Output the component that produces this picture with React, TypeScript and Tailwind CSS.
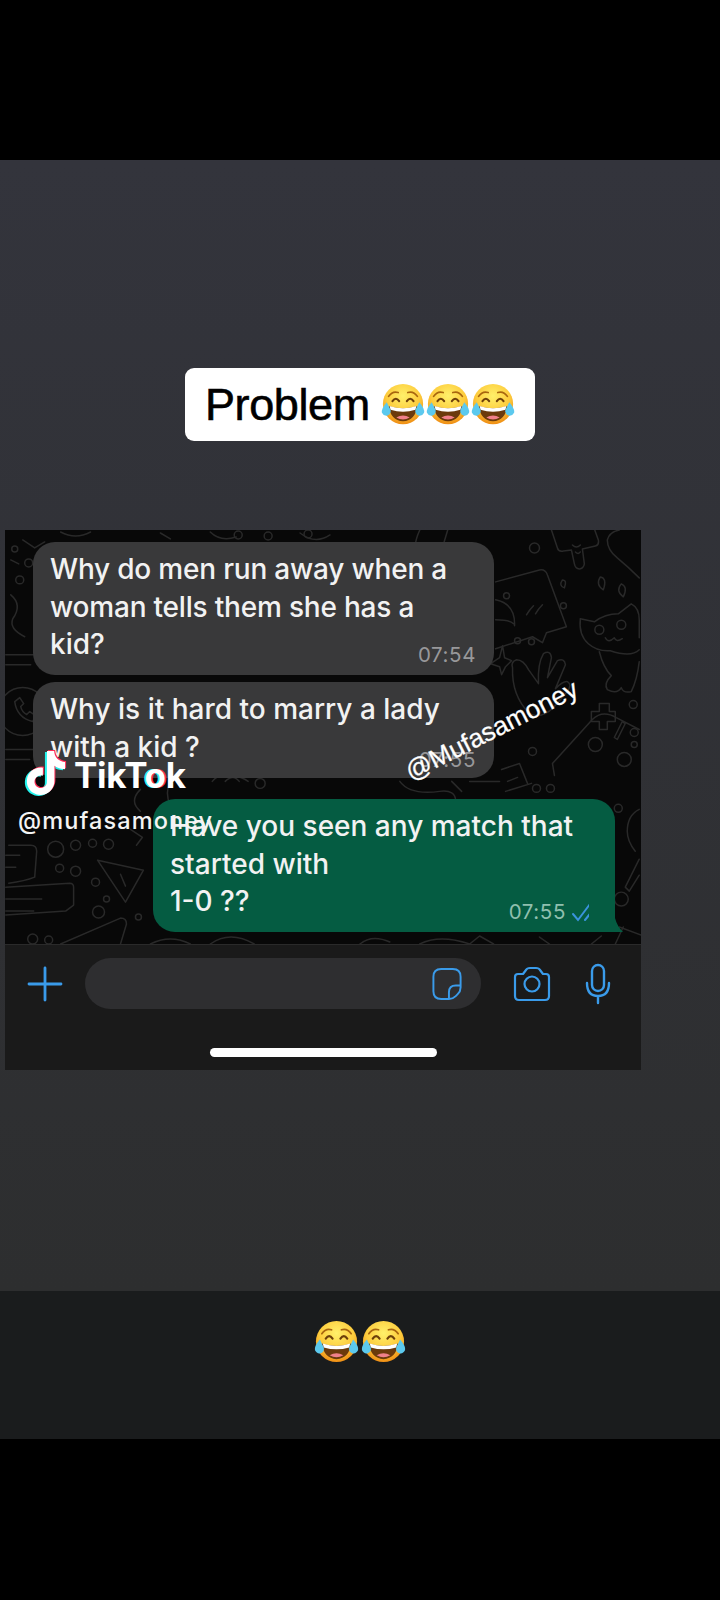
import { SiTiktok } from "react-icons/si";

const font = { fontFamily: 'Inter, "Liberation Sans", sans-serif' };

function Emoji({ size, id }: { size: number; id: string }) {
  return (
    <svg width={size} height={size} viewBox="0 0 48 48" className="shrink-0">
      <defs>
        <radialGradient id={id} cx="50%" cy="30%" r="72%">
          <stop offset="0%" stopColor="#fff06a" />
          <stop offset="58%" stopColor="#fdcb3c" />
          <stop offset="100%" stopColor="#ee8a12" />
        </radialGradient>
      </defs>
      <circle cx="24" cy="23" r="21" fill={`url(#${id})`} />
      <path d="M9 15q4-6 10-4M39 15q-4-6-10-4" stroke="#a8660f" strokeWidth="1.8" fill="none" strokeLinecap="round" />
      <path d="M13 20q3.500-5 7 0M28 20q3.500-5 7 0" stroke="#6d3f0a" strokeWidth="2.200" fill="none" strokeLinecap="round" />
      <path d="M9 25q15 5 30 0q-2 15-15 16q-13-1-15-16z" fill="#6b3a0c" />
      <path d="M10 25q14 5 28 0l-1 4q-13 4-26 0z" fill="#fff" />
      <path d="M17 37q7-4 14 0q-7 4-14 0z" fill="#f0808a" />
      <path d="M7 21q-6 7-5 11q2 4 6 3q4-2 3-6z" fill="#5cc9ee" />
      <path d="M41 21q6 7 5 11q-2 4-6 3q-4-2-3-6z" fill="#5cc9ee" />
    </svg>
  );
}

function Wallpaper() {
  return (
    <svg
      viewBox="5 530 636 415"
      className="absolute inset-0 h-full w-full"
      fill="none"
      stroke="#292929"
      strokeWidth="1.500"
      strokeLinecap="round"
      strokeLinejoin="round"
    >
      {/* left edge */}
      <path d="M22 540l12 8 10-6M10 560l8 4" />
      <circle cx="19" cy="580" r="4" />
      <circle cx="28" cy="563" r="4" />
      <circle cx="14" cy="549" r="3" />
      <path d="M10 595q12 10 2 24q-4 10 12 18M5 655h28M5 665h25" />
      <circle cx="22" cy="712" r="24" />
      <path d="M14 702q2 16 18 20l3-6-6-4-3 3q-5-3-6-8l3-3-4-6z" />
      <path d="M5 750h28M5 760h24" />
      {/* top strip */}
      <path d="M60 532q15 8 30 0M160 533l10 6M210 532q10 10 26 5M300 533q15 12 30 2" />
      <circle cx="238" cy="535" r="4" />
      <circle cx="268" cy="536" r="4" />
      <circle cx="308" cy="534" r="4" />
      {/* right-top stickers */}
      <path d="M420 530q-8 18-2 24q8 5 24-4l6-20" />
      <circle cx="535" cy="548" r="5" />
      <path d="M552 530l6 18q1 4 6 3l8-1 3 14q1 5 5 5t5-5l-2-15 13-3q4-1 3-6l-5-14" />
      <path d="M573 545q4 4 8 0M576 552q3 3 5 0" />
      <path d="M620 530q-10 2-12 10q0 10 10 18q12 10 22 20" />
      <path d="M496 582l44-12q6-1 8 5l19 52-20 6-4 10-10-6-37 12" />
      <path d="M527 615q3-5 7-9M536 614q3-5 7-9" />
      <circle cx="507" cy="596" r="3" />
      <path d="M496 600q20 4 19 26M496 620q14 0 18 4" />
      <path d="M565 588q-6-2-2-8q5 0 2 8zM604 590q-8-5-3-13q7 1 3 13zM624 597q-8-6-2-13q7 3 2 13z" />
      <circle cx="564" cy="606" r="3" />
      {/* cat */}
      <path d="M581 619l14 3q11-8 24-8l13-10q8 4 8 16v18" />
      <path d="M581 619q-2 16 8 25q9 8 22 7M640 650q-8 8-29 1" />
      <path d="M600 652q4 16 12 24q-8 8-4 14q10 5 14-2q2 6 10 4q6-12 8-30" />
      <circle cx="600" cy="630" r="4.500" />
      <circle cx="622" cy="625" r="4.500" />
      <path d="M606 638q3 6 9 0q2 5 8 1" />
      {/* sparkle & dots */}
      <path d="M503 646l-3 12-9 6 9 3 2 8 4-8 6-6-7-3z" />
      <circle cx="518" cy="641" r="3" />
      <circle cx="532" cy="642" r="3" />
      {/* hand */}
      <path d="M513 668q-2-6 4-8q7 0 12 10l10 14q-1-20 5-30q7-4 8 4l-4 20 10-17q7-3 8 4l-10 24q8-8 12-7q5 3 0 10l-14 16q-12 12-24 6q-18-18-17-46z" />
      {/* gamepad */}
      <path d="M555 776l-2-12 40-44q10-10 24-2l23 12" />
      <path d="M592 712h8v-8h10v8h6v10h-8v8h-8v-8h-8z" />
      <circle cx="596" cy="745" r="7" />
      <circle cx="625" cy="760" r="7" />
      <path d="M615 738l8-16 3 2-8 16z" />
      <circle cx="635" cy="733" r="4" />
      <circle cx="635" cy="745" r="3" />
      <circle cx="634" cy="705" r="4" />
      <circle cx="533" cy="752" r="4" />
      <path d="M502 770l18-6 8 20M508 782l10-4M506 792l26-8" />
      {/* middle band */}
      <path d="M212 782q6-8 18-6q12 1 18 6M225 782q8-8 14 0M170 782q-6 12 0 24M140 790q-12 12 0 22" />
      <circle cx="260" cy="784" r="5" />
      <path d="M400 782q10 14 40 10q16-2 16 10M452 782l10 10M470 782h30" />
      <circle cx="537" cy="789" r="4" />
      <circle cx="551" cy="789" r="4" />
      {/* lower left */}
      <path d="M8 846h22q6 0 6 6l-2 26q-10 4-26 6M5 856h14M5 868h10" />
      <circle cx="55" cy="850" r="8" />
      <circle cx="75" cy="846" r="5" />
      <circle cx="92" cy="844" r="4" />
      <circle cx="108" cy="845" r="5" />
      <circle cx="59" cy="869" r="4" />
      <circle cx="75" cy="872" r="5" />
      <circle cx="95" cy="883" r="4" />
      <circle cx="106" cy="900" r="3" />
      <circle cx="98" cy="913" r="6" />
      <path d="M97 861l46 10-18 32zM120 875l5 12" />
      <path d="M5 888l64-4q4 0 4 4v18l-8 6-60 4M5 900h36M5 912h28" />
      <path d="M60 945l60-26q6 0 6 6l-6 20" />
      <circle cx="32" cy="940" r="5" />
      <circle cx="48" cy="941" r="4" />
      <circle cx="138" cy="918" r="3" />
      <path d="M130 830l12 8-6 8" />
      {/* right of green bubble + below */}
      <circle cx="619" cy="809" r="4" />
      <path d="M640 810q-12 6-12 22q0 10 8 20M640 860l-14 28 4 4 10-16" />
      <circle cx="622" cy="900" r="7" />
      <path d="M620 928l22 8M616 945l8-17" />
      <path d="M150 945q20-10 40 0M210 945q20-14 44 0M360 945q12-10 30-2M420 945q20-10 50 0M470 945l10-8 14 8M540 938l10 7M592 945l10-8" />
    </svg>
  );
}

export default function App() {
  return (
    <div className="flex h-[1600px] w-[720px] flex-col overflow-hidden bg-black" style={font}>
      <div className="h-[160px] shrink-0 bg-black" />

      <div className="flex h-[1131px] shrink-0 flex-col bg-gradient-to-b from-[#33343c] to-[#2d2e2f] pt-[208px]">
        <div className="mx-auto flex h-[73px] w-[350px] items-center rounded-[9px] bg-white pl-[20px]">
          <span className="mr-[10px] text-[45px] leading-none tracking-[-0.4px] text-black [-webkit-text-stroke:0.6px_black]" style={{ fontFamily: '"Liberation Sans", sans-serif' }}>
            Problem
          </span>
          <div className="flex -space-x-[1px]">
            <Emoji size={46} id="a1" />
            <Emoji size={46} id="a2" />
            <Emoji size={46} id="a3" />
          </div>
        </div>

        <div className="relative ml-[5px] mt-[89px] h-[540px] w-[636px] bg-[#1a1a1a]">
          <div className="relative h-[415px] overflow-hidden border-b border-[#2a2a2a] bg-[#080808]">
            <Wallpaper />
            <div className="relative flex flex-col pt-[12px]">
              <div className="relative ml-[28px] h-[133px] w-[461px] rounded-[22px] bg-[#39393a] px-[17px] pt-[9px] text-[28px] font-medium leading-[37.500px] text-[#f2f2f2]">
                <div className="whitespace-nowrap tracking-[-0.2px]">Why do men run away when a</div>
                <div className="whitespace-nowrap tracking-[-0.2px]">woman tells them she has a</div>
                <div>kid?</div>
                <span className="absolute bottom-[8px] right-[18px] text-[20.500px] font-normal leading-[24px] tracking-[0.6px] text-[#98989a]">07:54</span>
              </div>
              <div className="relative ml-[28px] mt-[7px] h-[96px] w-[461px] rounded-[22px] bg-[#39393a] px-[17px] pt-[9px] text-[28px] font-medium leading-[37.500px] text-[#f2f2f2]">
                <div className="whitespace-nowrap">Why is it hard to marry a lady</div>
                <div>with a kid ?</div>
                <span className="absolute bottom-[6px] right-[18px] text-[20.500px] font-normal leading-[24px] tracking-[0.6px] text-[#98989a]">07:55</span>
              </div>
              <div className="relative ml-[148px] mt-[21px] h-[133px] w-[462px] rounded-[22px] bg-[#055c42] px-[17px] pt-[9px] text-[28px] font-medium leading-[37.500px] text-[#f2f2f2]">
                <div className="whitespace-nowrap">Have you seen any match that</div>
                <div>started with</div>
                <div>1-0 ??</div>
                <div className="absolute bottom-[8px] right-[16px] flex items-center gap-[6px]">
                  <span className="text-[20.500px] font-normal leading-[24px] tracking-[0.6px] text-[#8fbfae]">07:55</span>
                  <svg width="27" height="20" viewBox="0 0 27 20" fill="none" stroke="#3a93dc" strokeWidth="2" strokeLinecap="round">
                    <path d="M1 12l5 6L18 2M13 18L26 2" />
                  </svg>
                </div>
                <svg className="absolute bottom-0 right-[-8px]" width="34" height="30" viewBox="0 0 34 30" fill="#055c42">
                  <path d="M0 0H26V16q2 8 8 14H0z" />
                </svg>
              </div>
            </div>
          </div>

          <div className="flex h-[78px] items-center pl-[22px]">
            <svg width="36" height="36" viewBox="0 0 36 36" stroke="#3a9bea" strokeWidth="2.800" strokeLinecap="round" className="shrink-0">
              <path d="M18 2v32M2 18h32" />
            </svg>
            <div className="-mt-[2px] ml-[22px] flex h-[51px] w-[396px] items-center justify-end rounded-full bg-[#2e2e30] pr-[18px]">
              <svg width="32" height="33" viewBox="0 0 32 34" fill="none" stroke="#3a9bea" strokeWidth="2">
                <path d="M10 2h12q8 0 8 8v11q0 4-3 7l-2 2q-3 3-7 3H10q-8 0-8-8V10q0-8 8-8z" />
                <path d="M30 19h-5q-7 0-7 7v7" />
              </svg>
            </div>
            <svg className="ml-[31px] shrink-0" width="40" height="36" viewBox="0 0 40 36" fill="none" stroke="#3a9bea" strokeWidth="2.200" strokeLinejoin="round">
              <path d="M3 11q0-3 3-3h5l3-4q1-2 4-2h6q3 0 4 2l3 4h3q3 0 3 3v19q0 4-4 4H7q-4 0-4-4z" />
              <circle cx="20" cy="18" r="7.500" />
            </svg>
            <svg className="ml-[33px] shrink-0" width="26" height="42" viewBox="0 0 26 42" fill="none" stroke="#3a9bea" strokeWidth="2.400" strokeLinecap="round">
              <rect x="7" y="2" width="12" height="26" rx="6" />
              <path d="M2 20q0 13 11 13t11-13M13 33v7" />
            </svg>
          </div>

          <div className="mx-auto mt-[25px] h-[9px] w-[227px] rounded-full bg-white" />

          {/* TikTok watermark */}
          <div className="absolute left-[13px] top-[220px]">
            <div className="relative h-[50px] w-[180px]">
              <SiTiktok className="absolute left-[4px] top-[2px] text-[44px] text-[#25f4ee]" />
              <SiTiktok className="absolute left-[7px] top-[0px] text-[44px] text-[#fe2c55]" />
              <SiTiktok className="absolute left-[5.500px] top-[1px] text-[44px] text-white" />
              <span className="absolute left-[56px] top-[5px] text-[35px] font-bold leading-[40px] tracking-[-0.3px] text-white">
                TikT<span className="[text-shadow:-1.500px_0_#25f4ee,1.500px_0_#fe2c55]">o</span>k
              </span>
            </div>
            <div className="mt-[8px] whitespace-nowrap text-[23.500px] font-medium leading-[26px] tracking-[1.1px] text-[#f4f4f4]">@mufasamoney</div>
          </div>

          <div className="absolute left-[402px] top-[228px] origin-left -rotate-[27deg] whitespace-nowrap text-[26px] leading-[30px] text-white [-webkit-text-stroke:0.3px_white]" style={{ fontFamily: '"Liberation Sans", sans-serif' }}>
            @Mufasamoney
          </div>
        </div>
      </div>

      <div className="flex h-[148px] shrink-0 items-start justify-center bg-[#1a1c1d] pt-[28px]">
        <Emoji size={47} id="b1" />
        <Emoji size={47} id="b2" />
      </div>
      <div className="flex-1 bg-black" />
    </div>
  );
}
